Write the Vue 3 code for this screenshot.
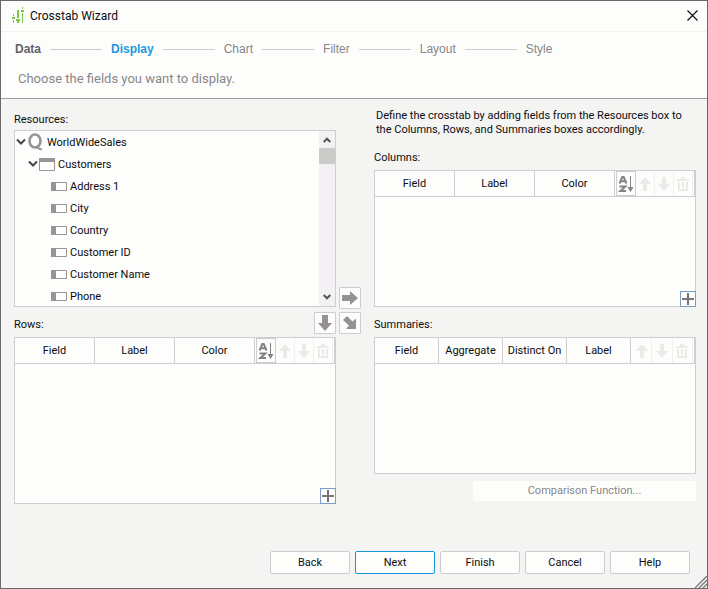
<script setup>
const steps = [
  { name: 'Data', state: 'done' },
  { name: 'Display', state: 'current' },
  { name: 'Chart', state: '' },
  { name: 'Filter', state: '' },
  { name: 'Layout', state: '' },
  { name: 'Style', state: '' },
]

const fields = ['Address 1', 'City', 'Country', 'Customer ID', 'Customer Name', 'Phone']

const panels = [
  { id: 'columns', title: 'Columns:', heads: ['Field', 'Label', 'Color'], tools: ['sort', 'up', 'down', 'delete'], add: true },
  { id: 'rows', title: 'Rows:', heads: ['Field', 'Label', 'Color'], tools: ['sort', 'up', 'down', 'delete'], add: true },
  { id: 'summaries', title: 'Summaries:', heads: ['Field', 'Aggregate', 'Distinct On', 'Label'], tools: ['up', 'down', 'delete'], add: false },
]

const toolNames = { sort: 'Sort', up: 'Move up', down: 'Move down', delete: 'Delete' }
const actions = ['Back', 'Next', 'Finish', 'Cancel', 'Help']
</script>

<template>
  <main class="window">
    <header class="titlebar">
      <svg class="logo" width="14" height="18" viewBox="0 0 14 18" aria-hidden="true">
        <g fill="#7dc648">
          <path d="M3 7h1v2h-1zM3 13h1v3h-1zM2 10h3v2h-3z" />
          <path d="M7 3h2v8h-2zM6 12h4v2h-4zM7 14h2v2h-2z" />
          <path d="M12 0h1v2h-1zM11 3h3v2h-3zM12 6h1v10h-1z" />
        </g>
      </svg>
      <h1>Crosstab Wizard</h1>
      <button class="close" type="button" aria-label="Close">
        <svg width="11" height="11" viewBox="0 0 11 11"><path d="M.5.5l10 10M10.500.5l-10 10" stroke="#111" stroke-width="1.200" /></svg>
      </button>
    </header>

    <section class="intro">
      <ol class="steps">
        <li v-for="step in steps" :key="step.name" :class="step.state">{{ step.name }}</li>
      </ol>
      <p class="hint">Choose the fields you want to display.</p>
    </section>

    <section class="body">
      <div class="cell resources">
        <h2 class="label">Resources:</h2>
        <div class="box tree-box">
          <ul class="tree">
            <li>
              <div class="node">
                <svg class="chevron" width="10" height="8" viewBox="0 0 10 8"><path d="M1 1.500l4 4 4-4" fill="none" stroke="#484548" stroke-width="2" /></svg>
                <svg class="query" width="16" height="18" viewBox="0 0 16 18"><ellipse cx="7" cy="8" rx="5.500" ry="6.500" fill="none" stroke="#979397" stroke-width="2.600" /><path d="M8 14.500q2 0 3 1t3 .8" fill="none" stroke="#979397" stroke-width="2" /></svg>
                <span>WorldWideSales</span>
              </div>
              <ul>
                <li>
                  <div class="node table-node">
                    <svg class="chevron" width="10" height="8" viewBox="0 0 10 8"><path d="M1 1.500l4 4 4-4" fill="none" stroke="#484548" stroke-width="2" /></svg>
                    <svg width="16" height="13" viewBox="0 0 16 13"><path d="M.5.5h15v12h-15z" fill="#fdfefc" stroke="#979397" /><path d="M0 0h16v4H0z" fill="#979397" /></svg>
                    <span>Customers</span>
                  </div>
                  <ul>
                    <li v-for="field in fields" :key="field" class="node field-node">
                      <svg width="16" height="9" viewBox="0 0 16 9"><path d="M.5.5h15v8h-15z" fill="#fdfefc" stroke="#979397" /><path d="M0 0h5v9H0z" fill="#979397" /></svg>
                      <span>{{ field }}</span>
                    </li>
                  </ul>
                </li>
              </ul>
            </li>
          </ul>
          <div class="scrollbar">
            <svg width="8" height="6" viewBox="0 0 8 6"><path d="M.7 5L4 1.700 7.300 5" fill="none" stroke="#555" stroke-width="2" /></svg>
            <div class="thumb"></div>
            <svg width="8" height="6" viewBox="0 0 8 6"><path d="M.7 1L4 4.300 7.300 1" fill="none" stroke="#555" stroke-width="2" /></svg>
          </div>
        </div>
      </div>

      <div class="transfer to-columns">
        <button class="arrow" type="button" aria-label="Add to columns">
          <svg width="16" height="14" viewBox="0 0 16 14"><path d="M0 4h8V0l8 7-8 7v-4H0z" /></svg>
        </button>
      </div>

      <div v-for="panel in panels" :key="panel.id" class="cell" :class="panel.id">
        <p v-if="panel.id === 'columns'" class="help">Define the crosstab by adding fields from the Resources box to the Columns, Rows, and Summaries boxes accordingly.</p>
        <div class="label-row">
          <h2 class="label">{{ panel.title }}</h2>
          <button v-if="panel.id === 'rows'" class="arrow" type="button" aria-label="Add to rows">
            <svg width="14" height="16" viewBox="0 0 14 16"><path d="M4 0h6v8h4l-7 8-7-8h4z" /></svg>
          </button>
        </div>
        <div class="box grid-box">
          <table :class="{ narrow: panel.heads.length === 4 }">
            <thead>
              <tr>
                <th v-for="head in panel.heads" :key="head" scope="col">{{ head }}</th>
                <td class="tool-cell">
                  <div class="tools">
                    <button v-for="tool in panel.tools" :key="tool" class="tool" :class="tool" type="button" :disabled="tool !== 'sort'" :aria-label="toolNames[tool]">
                      <svg v-if="tool === 'sort'" width="16" height="18" viewBox="0 0 16 18">
                        <path d="M1.500 8.500L4.300 2h1.400L8.500 8.500M2.700 6.300h4.600M1.500 11.500h5.800L2.400 16h5.600" fill="none" stroke="#858285" stroke-width="2" />
                        <path d="M12 1h1v11h2.500L12.500 17l-3-5H12z" fill="#858285" />
                      </svg>
                      <svg v-else-if="tool === 'up'" width="12" height="14" viewBox="0 0 12 14"><path d="M4 14V7H0l6-7 6 7H8v7z" /></svg>
                      <svg v-else-if="tool === 'down'" width="12" height="14" viewBox="0 0 12 14"><path d="M4 0v7H0l6 7 6-7H8V0z" /></svg>
                      <svg v-else width="12" height="14" viewBox="0 0 12 14"><path d="M0 2h4V0h4v2h4v2H0zM1 5h2v7h6V5h2v9H1zM5 5h2v6H5z" /></svg>
                    </button>
                  </div>
                </td>
              </tr>
            </thead>
            <tbody></tbody>
          </table>
          <button v-if="panel.add" class="add" type="button" aria-label="Add field">
            <svg width="12" height="12" viewBox="0 0 12 12"><path d="M5 0h2v5h5v2H7v5H5V7H0V5h5z" fill="#777577" /></svg>
          </button>
        </div>
        <button v-if="panel.id === 'summaries'" class="compare" type="button" disabled>Comparison Function...</button>
      </div>

      <div class="transfer to-summaries">
        <button class="arrow" type="button" aria-label="Add to summaries">
          <svg width="14" height="14" viewBox="0 0 14 14"><path d="M4 0l5.500 5.500L13 2.500V13H3l3-3.500L0 4z" /></svg>
        </button>
      </div>
    </section>

    <footer class="actions">
      <button v-for="action in actions" :key="action" type="button" :class="{ primary: action === 'Next' }">{{ action }}</button>
    </footer>
    <svg class="grip" width="12" height="12" viewBox="0 0 12 12" aria-hidden="true">
      <path d="M0 12L12 0M4 12l8-8M8 12l4-4" stroke="#777" stroke-width="1.300" />
    </svg>
  </main>
</template>

<style>
body {
  margin: 0;
}
</style>

<style scoped>
.window {
  position: relative;
  box-sizing: border-box;
  display: flex;
  flex-direction: column;
  min-height: 100vh;
  border: 1px solid #6c676d;
  background: #f4f5f3;
  color: #0c0c10;
  font: 11px/14px Roboto, sans-serif;
}

h1,
h2,
p,
ul,
ol {
  margin: 0;
  padding: 0;
  list-style: none;
  font-weight: 400;
}

button {
  box-sizing: border-box;
  display: flex;
  align-items: center;
  justify-content: center;
  margin: 0;
  padding: 0;
  border: 1px solid #cfccd0;
  background: #fdfefc;
  color: inherit;
  font: inherit;
}

.titlebar {
  display: flex;
  align-items: center;
  height: 30px;
  padding: 0 9px;
  border-bottom: 1px solid #f2f3f1;
  background: #fdfefc;
}

.titlebar h1 {
  flex: 1;
  margin-left: 6px;
  font-size: 12px;
  line-height: 16px;
}

.close {
  padding-bottom: 2px;
  border: 0;
  background: none;
}

.intro {
  padding: 10px 14px;
  border-bottom: 1px solid #a09ba2;
  background: #fdfefc;
}

.steps {
  display: flex;
  color: #88868a;
  font: 12px/14px "Liberation Sans", sans-serif;
}

.steps li {
  display: flex;
  align-items: center;
}

.steps li + li::before {
  content: "";
  width: 52px;
  margin: 0 9px;
  border-top: 1px solid #cdcdcd;
}

.steps .done {
  color: #636166;
  font-weight: 700;
}

.steps .current {
  color: #1e98dc;
  font-weight: 700;
}

.hint {
  margin: 14px 3px 0;
  color: #88868a;
  font-size: 13px;
  line-height: 18px;
}

.body {
  flex: 1;
  display: grid;
  grid-template-columns: 1fr 38px 1fr;
  grid-template-rows: 203fr 192fr;
  row-gap: 3px;
  padding: 8px 11px 0 13px;
}

.cell {
  display: flex;
  flex-direction: column;
  min-width: 0;
}

.resources {
  grid-area: 1 / 1;
  padding: 6px 0 2px;
}

.columns {
  grid-area: 1 / 3;
  padding-bottom: 2px;
}

.rows {
  grid-area: 2 / 1;
}

.summaries {
  grid-area: 2 / 3;
  padding-bottom: 3px;
}

.transfer {
  display: flex;
  padding-left: 3px;
}

.to-columns {
  grid-area: 1 / 2;
  align-items: flex-end;
}

.to-summaries {
  grid-area: 2 / 2;
  align-items: flex-start;
}

.help {
  margin: 2px 0 0 2px;
}

.label {
  font-size: 11px;
  line-height: 14px;
}

.resources .label {
  margin-bottom: 3px;
}

.label-row {
  display: flex;
  align-items: center;
  justify-content: space-between;
  height: 25px;
}

.columns .label-row {
  margin-top: 8px;
}

.box {
  position: relative;
  box-sizing: border-box;
  flex: 1;
  border: 1px solid #d0cdd1;
  background: #fdfefc;
}

.tree-box {
  display: flex;
  overflow: hidden;
}

.tree {
  flex: 1;
  height: 0;
}

.node {
  display: flex;
  align-items: center;
  gap: 3px;
  height: 22px;
  padding-left: 1px;
}

.node span {
  padding-top: 1px;
}

.query {
  margin-left: -1px;
}

.table-node {
  padding-left: 13px;
}

.table-node .chevron {
  margin-right: -2px;
}

.field-node {
  padding-left: 36px;
}

.scrollbar {
  display: flex;
  flex-direction: column;
  align-items: center;
  width: 16px;
  padding: 6px 0;
  box-sizing: border-box;
  background: #f3f1f4;
}

.thumb {
  flex: 0 0 16px;
  width: 100%;
  margin: 5px 0 auto;
  background: #cbccca;
}

.arrow {
  width: 22px;
  height: 22px;
  border-radius: 1px;
}

.arrow svg {
  fill: #959196;
}

.rows .arrow {
  align-self: flex-start;
}

table {
  width: 100%;
  border-collapse: separate;
  border-spacing: 0;
  table-layout: fixed;
}

th,
td {
  box-sizing: border-box;
  height: 26px;
  padding: 0;
  border-bottom: 1px solid #d0cdd1;
  font-weight: 400;
  text-align: center;
  white-space: nowrap;
}

th {
  border-right: 1px solid #d0cdd1;
}

.tool-cell {
  width: 80px;
}

.narrow .tool-cell {
  width: 64px;
}

.tools {
  display: flex;
  height: 25px;
  padding: 0 1px;
  border-right: 1px solid #d0cdd1;
}

.tool {
  flex: 1;
  border: 0;
  border-right: 1px solid #f0f1ef;
}

.tool.sort {
  border: 1px solid #cfccd0;
}

.tool svg {
  flex: none;
  fill: #eaebe9;
}

.add {
  position: absolute;
  right: -1px;
  bottom: -1px;
  width: 16px;
  height: 16px;
  border-color: #7b9dc2;
}

.compare {
  align-self: flex-end;
  width: 223px;
  height: 20px;
  margin-top: 7px;
  border: 0;
  color: #88868a;
}

.actions {
  display: flex;
  justify-content: flex-end;
  gap: 5px;
  padding: 47px 17px 14px;
}

.actions button {
  width: 80px;
  height: 23px;
  border-radius: 2px;
}

.actions .primary {
  border-color: #1795d9;
}

.grip {
  position: absolute;
  right: 0;
  bottom: 0;
}
</style>
